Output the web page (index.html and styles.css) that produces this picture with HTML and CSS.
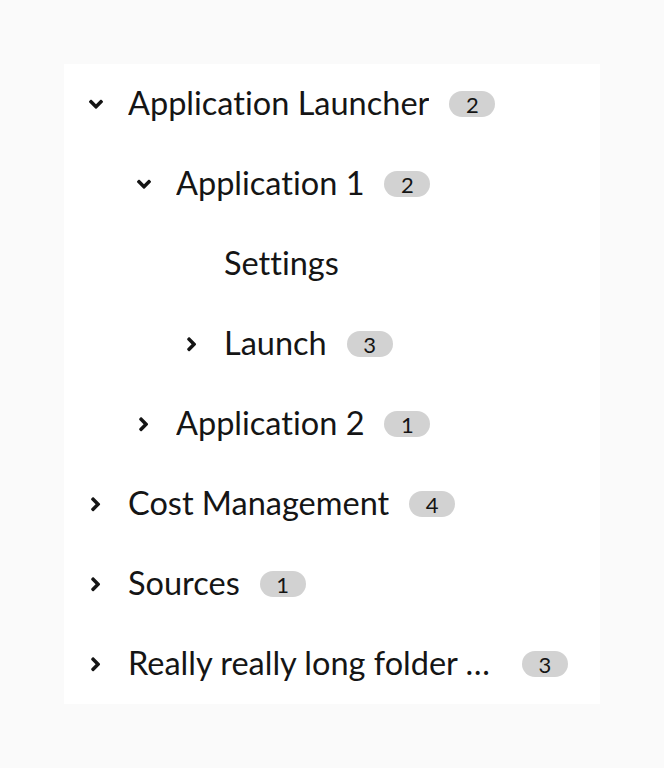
FILE: index.html
```html
<!DOCTYPE html>
<html lang="en">
<head>
  <meta charset="UTF-8">
  <title>Tree view with badges</title>
  <link rel="stylesheet" href="styles.css">
</head>
<body>
  <div class="tree-view">
    <ul class="tree">
      <li class="tree-item">
        <div class="node">
          <span class="toggle">
            <svg class="icon down" viewBox="0 0 320 512"><path d="M143 352.3L7 216.3c-9.4-9.4-9.4-24.6 0-33.9l22.6-22.6c9.4-9.4 24.6-9.4 33.9 0l96.4 96.4 96.4-96.4c9.4-9.4 24.6-9.4 33.9 0l22.6 22.6c9.4 9.4 9.4 24.6 0 33.9l-136 136c-9.2 9.4-24.4 9.4-33.8 0z"/></svg>
          </span>
          <span class="label">Application Launcher</span>
          <span class="badge">2</span>
        </div>
        <ul class="tree">
          <li class="tree-item">
            <div class="node">
              <span class="toggle">
                <svg class="icon down" viewBox="0 0 320 512"><path d="M143 352.3L7 216.3c-9.4-9.4-9.4-24.6 0-33.9l22.6-22.6c9.4-9.4 24.6-9.4 33.9 0l96.4 96.4 96.4-96.4c9.4-9.4 24.6-9.4 33.9 0l22.6 22.6c9.4 9.4 9.4 24.6 0 33.9l-136 136c-9.2 9.4-24.4 9.4-33.8 0z"/></svg>
              </span>
              <span class="label">Application 1</span>
              <span class="badge">2</span>
            </div>
            <ul class="tree">
              <li class="tree-item">
                <div class="node">
                  <span class="toggle"></span>
                  <span class="label">Settings</span>
                </div>
              </li>
              <li class="tree-item">
                <div class="node">
                  <span class="toggle">
                    <svg class="icon right" viewBox="0 0 256 512"><path d="M224.3 273l-136 136c-9.4 9.4-24.6 9.4-33.9 0l-22.6-22.6c-9.4-9.4-9.4-24.6 0-33.9l96.4-96.4-96.4-96.4c-9.4-9.4-9.4-24.6 0-33.9L54.3 103c9.4-9.4 24.6-9.4 33.9 0l136 136c9.5 9.4 9.5 24.6.1 34z"/></svg>
                  </span>
                  <span class="label">Launch</span>
                  <span class="badge">3</span>
                </div>
              </li>
            </ul>
          </li>
          <li class="tree-item">
            <div class="node">
              <span class="toggle">
                <svg class="icon right" viewBox="0 0 256 512"><path d="M224.3 273l-136 136c-9.4 9.4-24.6 9.4-33.9 0l-22.6-22.6c-9.4-9.4-9.4-24.6 0-33.9l96.4-96.4-96.4-96.4c-9.4-9.4-9.4-24.6 0-33.9L54.3 103c9.4-9.4 24.6-9.4 33.9 0l136 136c9.5 9.4 9.5 24.6.1 34z"/></svg>
              </span>
              <span class="label">Application 2</span>
              <span class="badge">1</span>
            </div>
          </li>
        </ul>
      </li>
      <li class="tree-item">
        <div class="node">
          <span class="toggle">
            <svg class="icon right" viewBox="0 0 256 512"><path d="M224.3 273l-136 136c-9.4 9.4-24.6 9.4-33.9 0l-22.6-22.6c-9.4-9.4-9.4-24.6 0-33.9l96.4-96.4-96.4-96.4c-9.4-9.4-9.4-24.6 0-33.9L54.3 103c9.4-9.4 24.6-9.4 33.9 0l136 136c9.5 9.4 9.5 24.6.1 34z"/></svg>
          </span>
          <span class="label">Cost Management</span>
          <span class="badge">4</span>
        </div>
      </li>
      <li class="tree-item">
        <div class="node">
          <span class="toggle">
            <svg class="icon right" viewBox="0 0 256 512"><path d="M224.3 273l-136 136c-9.4 9.4-24.6 9.4-33.9 0l-22.6-22.6c-9.4-9.4-9.4-24.6 0-33.9l96.4-96.4-96.4-96.4c-9.4-9.4-9.4-24.6 0-33.9L54.3 103c9.4-9.4 24.6-9.4 33.9 0l136 136c9.5 9.4 9.5 24.6.1 34z"/></svg>
          </span>
          <span class="label">Sources</span>
          <span class="badge">1</span>
        </div>
      </li>
      <li class="tree-item">
        <div class="node">
          <span class="toggle">
            <svg class="icon right" viewBox="0 0 256 512"><path d="M224.3 273l-136 136c-9.4 9.4-24.6 9.4-33.9 0l-22.6-22.6c-9.4-9.4-9.4-24.6 0-33.9l96.4-96.4-96.4-96.4c-9.4-9.4-9.4-24.6 0-33.9L54.3 103c9.4-9.4 24.6-9.4 33.9 0l136 136c9.5 9.4 9.5 24.6.1 34z"/></svg>
          </span>
          <span class="label">Really really long folder name that overflows the container it is in</span>
          <span class="badge">3</span>
        </div>
      </li>
    </ul>
  </div>
</body>
</html>
```

FILE: styles.css
```css
/* Tree view with badges */
body {
  margin: 0;
  padding: 64px;
  background-color: #fafafa;
  font-family: Lato, "Open Sans", sans-serif;
  font-variant-ligatures: none;
  color: #151515;
}

.tree-view {
  background-color: #fff;
}

.tree {
  list-style: none;
  margin: 0;
  padding: 0;
}

.tree .tree {
  padding-left: 48px;
}

.node {
  display: flex;
  align-items: center;
  height: 80px;
  padding: 0 32px 0 8px;
  font-size: 32.5px;
}

.toggle {
  flex-shrink: 0;
  width: 48px;
  margin-right: 8px;
  display: flex;
  justify-content: center;
  align-items: center;
}

.icon {
  height: 22.4px;
  fill: #151515;
}

.icon.down {
  width: 14px;
}

.icon.right {
  width: 11.2px;
}

.label {
  min-width: 0;
  line-height: 1.25;
  padding-bottom: 1px;
  white-space: nowrap;
  overflow: hidden;
  text-overflow: ellipsis;
}

.badge {
  flex-shrink: 0;
  display: inline-flex;
  align-items: center;
  justify-content: center;
  min-width: 46px;
  height: 26px;
  margin-left: 20px;
  padding: 0 16px;
  box-sizing: border-box;
  border-radius: 13px;
  background-color: #d2d2d2;
  font-size: 22px;
  color: #151515;
}
```
